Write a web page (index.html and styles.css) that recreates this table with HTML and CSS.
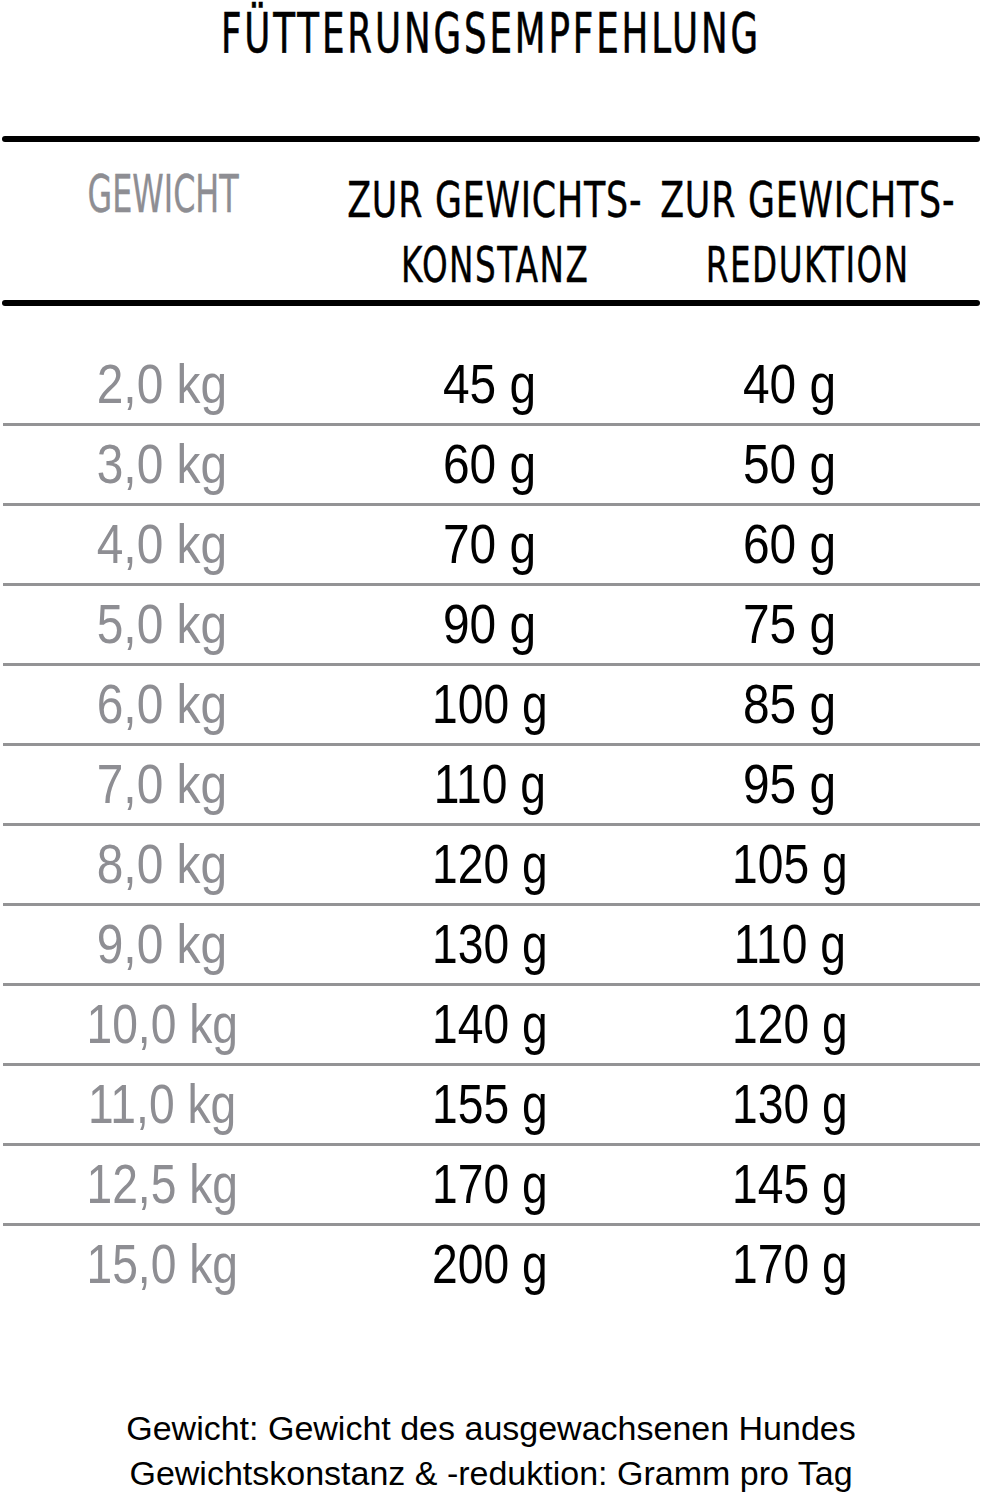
FILE: index.html
```html
<!DOCTYPE html>
<html lang="de">
<head>
<meta charset="utf-8">
<title>Fütterungsempfehlung</title>
<link rel="stylesheet" href="styles.css">
</head>
<body>
<div class="page">
  <h1 class="title"><span class="title-text">FÜTTERUNGSEMPFEHLUNG</span></h1>
  <div class="rule"></div>
  <div class="head">
    <div class="h-cell h-weight"><span class="hand hand-gray">GEWICHT</span></div>
    <div class="h-cell h-col"><span class="hand">ZUR GEWICHTS-</span><span class="hand hand-2">KONSTANZ</span></div>
    <div class="h-cell h-col"><span class="hand">ZUR GEWICHTS-</span><span class="hand hand-2">REDUKTION</span></div>
  </div>
  <div class="rule"></div>
  <div class="table">
    <div class="row"><span class="c c1"><span class="n">2,0 kg</span></span><span class="c c2"><span class="n">45 g</span></span><span class="c c3"><span class="n">40 g</span></span></div>
    <div class="row"><span class="c c1"><span class="n">3,0 kg</span></span><span class="c c2"><span class="n">60 g</span></span><span class="c c3"><span class="n">50 g</span></span></div>
    <div class="row"><span class="c c1"><span class="n">4,0 kg</span></span><span class="c c2"><span class="n">70 g</span></span><span class="c c3"><span class="n">60 g</span></span></div>
    <div class="row"><span class="c c1"><span class="n">5,0 kg</span></span><span class="c c2"><span class="n">90 g</span></span><span class="c c3"><span class="n">75 g</span></span></div>
    <div class="row"><span class="c c1"><span class="n">6,0 kg</span></span><span class="c c2"><span class="n w">100 g</span></span><span class="c c3"><span class="n">85 g</span></span></div>
    <div class="row"><span class="c c1"><span class="n">7,0 kg</span></span><span class="c c2"><span class="n w">110 g</span></span><span class="c c3"><span class="n">95 g</span></span></div>
    <div class="row"><span class="c c1"><span class="n">8,0 kg</span></span><span class="c c2"><span class="n w">120 g</span></span><span class="c c3"><span class="n w">105 g</span></span></div>
    <div class="row"><span class="c c1"><span class="n">9,0 kg</span></span><span class="c c2"><span class="n w">130 g</span></span><span class="c c3"><span class="n w">110 g</span></span></div>
    <div class="row"><span class="c c1"><span class="n w">10,0 kg</span></span><span class="c c2"><span class="n w">140 g</span></span><span class="c c3"><span class="n w">120 g</span></span></div>
    <div class="row"><span class="c c1"><span class="n w">11,0 kg</span></span><span class="c c2"><span class="n w">155 g</span></span><span class="c c3"><span class="n w">130 g</span></span></div>
    <div class="row"><span class="c c1"><span class="n w">12,5 kg</span></span><span class="c c2"><span class="n w">170 g</span></span><span class="c c3"><span class="n w">145 g</span></span></div>
    <div class="row"><span class="c c1"><span class="n w">15,0 kg</span></span><span class="c c2"><span class="n w">200 g</span></span><span class="c c3"><span class="n w">170 g</span></span></div>
  </div>
  <div class="foot">
    <p class="foot-line">Gewicht: Gewicht des ausgewachsenen Hundes</p>
    <p class="foot-line">Gewichtskonstanz &amp; -reduktion: Gramm pro Tag</p>
  </div>
</div>
</body>
</html>
```

FILE: styles.css
```css
html, body {
  margin: 0;
  padding: 0;
  background: #ffffff;
}

.page {
  width: 982px;
  font-family: "Liberation Sans", Arial, sans-serif;
  color: #000;
}

.title {
  margin: 0;
  padding-top: 6px;
  height: 136px;
  box-sizing: border-box;
  text-align: center;
  font-family: "DejaVu Sans Condensed", "DejaVu Sans", sans-serif;
  font-weight: normal;
  font-size: 55px;
  line-height: 55px;
  letter-spacing: 4px;
}

.title-text {
  display: inline-block;
  transform: scaleX(0.72);
  -webkit-text-stroke: 0.6px #000;
}

.rule {
  height: 6px;
  margin: 0 2px;
  background: #000;
  border-radius: 3px;
}

.head {
  display: grid;
  grid-template-columns: 326px 338px 288px;
  height: 158px;
  box-sizing: border-box;
  padding-top: 20px;
}

.h-cell {
  display: flex;
  flex-direction: column;
  align-items: center;
}

.h-col {
  padding-top: 6px;
}

.hand {
  display: block;
  font-family: "DejaVu Sans Condensed", "DejaVu Sans", sans-serif;
  font-size: 49px;
  line-height: 65px;
  white-space: nowrap;
  letter-spacing: 1px;
  transform: scaleX(0.79);
  -webkit-text-stroke: 0.4px #000;
}

.hand-2 {
  transform: scaleX(0.74);
  letter-spacing: 2px;
}

.hand-gray {
  color: #8e8e93;
  font-size: 52px;
  letter-spacing: 0;
  transform: scaleX(0.68);
  -webkit-text-stroke: 0.4px #8e8e93;
}

.table {
  margin: 40px 2px 0 3px;
}

.row {
  display: grid;
  grid-template-columns: 318px 338px 262px;
  height: 80px;
  box-sizing: border-box;
  border-bottom: 3px solid #939395;
  align-items: center;
}

.row:last-child {
  border-bottom: none;
  height: 77px;
}

.c {
  display: flex;
  justify-content: center;
  font-size: 55px;
  line-height: 77px;
  white-space: nowrap;
}

.c1 {
  color: #8e8e93;
}

.n {
  display: inline-block;
  transform: scaleX(0.87);
}

.n.w {
  transform: scaleX(0.84);
}

.foot {
  margin-top: 103px;
  text-align: center;
}

.foot-line {
  margin: 0;
  font-size: 34px;
  line-height: 45px;
}
```
